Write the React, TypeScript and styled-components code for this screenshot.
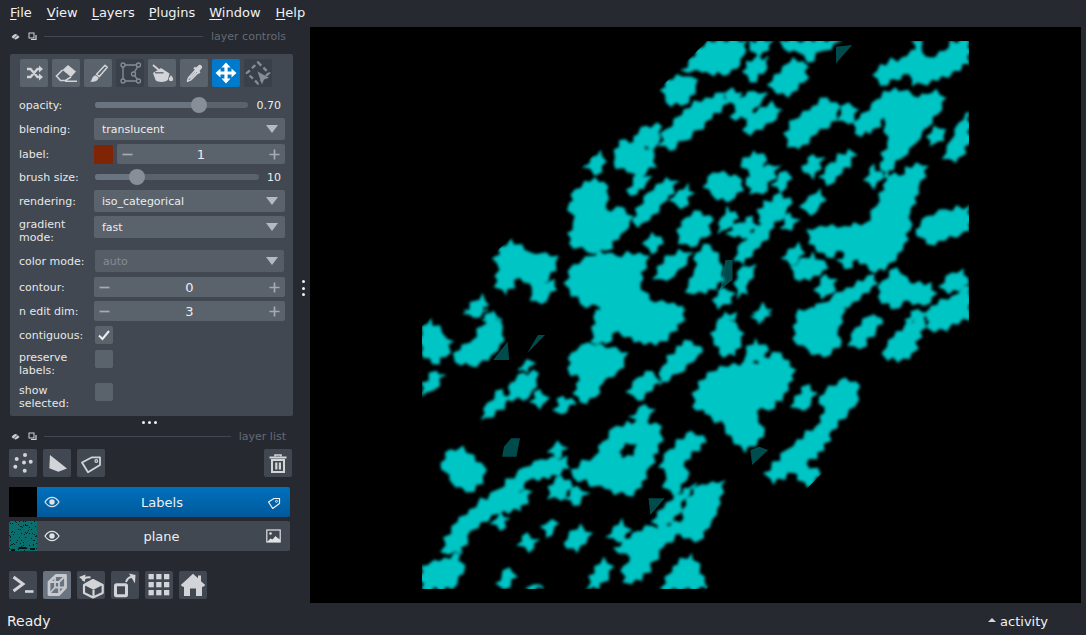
import React from "react";
import styled, { createGlobalStyle } from "styled-components";

const Global = createGlobalStyle`
  html, body { margin: 0; height: 100%; overflow: hidden; background: #262930; }
  #root { height: 100%; }
  * { box-sizing: border-box; }
`;

const Page = styled.div`
  width: 100%; height: 100vh; display: flex; flex-direction: column;
  background: #262930; color: #f0f1f2;
  font-family: "DejaVu Sans", "Liberation Sans", sans-serif;
`;
const MenuBar = styled.nav`
  height: 27px; flex: none; display: flex; align-items: center; gap: 14px; padding: 0 0 3px 10px; font-size: 13px;
`;
const MenuItem = styled.span`
  &:first-child { margin-right: 1px; }
  &:nth-child(5) { margin-right: 1px; }
  u { text-decoration: underline; text-underline-offset: 2px; }
`;
const Main = styled.div`flex: 1; display: flex; min-height: 0;`;
const Sidebar = styled.aside`width: 298px; flex: none; display: flex; flex-direction: column;`;
const Splitter = styled.div`
  width: 12px; flex: none; display: flex; flex-direction: column; align-items: center; justify-content: center; gap: 3.5px; padding-right: 2px;
  transform: translateY(-27px);
`;
const Dot = styled.i`width: 3px; height: 3px; border-radius: 50%; background: #f0f1f2; display: block;`;
const DockHeader = styled.div<{ $h: number; $mb: number }>`
  height: ${p => p.$h}px; margin-bottom: ${p => p.$mb}px; flex: none;
  display: flex; align-items: center; padding: 0 12px 0 11px; gap: 8px;
`;
const DockLine = styled.div`flex: 1; height: 1px; background: #414851; margin: 0 0 0 -1px;`;
const DockTitle = styled.span`font-size: 11px; color: #646b75;`;
const Panel = styled.section`
  margin-left: 10px; width: 283px; height: 362px; flex: none; background: #414851; border-radius: 2px; padding-top: 5px;
`;
const Toolbar = styled.div`display: flex; gap: 4px; padding-left: 10px;`;
const Btn = styled.div<{ $v?: "panel" | "dim" | "on" | "list" | "active" }>`
  width: 28px; height: 28px; flex: none; border-radius: 2px; display: flex; align-items: center; justify-content: center;
  color: ${p => (p.$v === "dim" ? "#868c94" : p.$v === "on" ? "#ffffff" : p.$v === "active" ? "#c6c9cd" : "#d2d4d7")};
  background: ${p => ({ panel: "#5a626c", dim: "#3a4049", on: "#007acc", list: "#414851", active: "#6a7380" }[p.$v || "list"])};
  svg { display: block; }
`;
const Row = styled.div<{ $h: number; $top: number }>`
  height: ${p => p.$h}px; margin-top: ${p => p.$top}px; display: flex; align-items: center; padding: 0 8px 0 9px;
`;
const Label = styled.div<{ $two?: number }>`
  width: 75px; flex: none; font-size: 11px; line-height: 13px; color: #e6e7e9;
  ${p => (p.$two !== undefined ? `align-self: flex-start; margin-top: ${p.$two}px;` : "")}
`;
const Combo = styled.div<{ $off?: boolean }>`
  flex: 1; height: 100%; border-radius: 2px; background: #5a626c; display: flex; align-items: center; justify-content: space-between;
  padding: 0 ${p => (p.$off ? 6 : 7)}px 0 8px; font-size: 11px; color: ${p => (p.$off ? "#868c94" : "#eceded")};
  ${p => (p.$off ? "margin: 0 1px; background: #565d67;" : "")}
`;
const Arrow = styled.i`
  width: 0; height: 0; border-left: 6.5px solid transparent; border-right: 6.5px solid transparent; border-top: 8px solid #b6babf; display: block;
`;
const SliderWrap = styled.div`flex: 1; display: flex; align-items: center; margin-left: 1px; margin-right: 4px;`;
const Track = styled.div`flex: 1; height: 6px; border-radius: 3px; background: #5a626c; position: relative;`;
const Fill = styled.div`height: 100%; border-radius: 3px; background: #6a7380;`;
const Knob = styled.div`position: absolute; top: -5px; width: 16px; height: 16px; margin-left: -8px; border-radius: 50%; background: #868e98;`;
const SliderValue = styled.div<{ $w: number }>`width: ${p => p.$w}px; flex: none; text-align: right; font-size: 11px; color: #eceded;`;
const Swatch = styled.div`width: 19px; height: 19px; background: #7f2506; border-radius: 1px; flex: none; margin-right: 4px;`;
const Spin = styled.div`
  flex: 1; height: 100%; background: #5a626c; border-radius: 2px; display: flex; align-items: center; justify-content: space-between;
  padding: 0 5px; font-size: 13px; color: #eceded;
`;
const Check = styled.div`width: 18px; height: 18px; margin-left: 1px; border-radius: 2px; background: #5a626c; display: flex; align-items: center; justify-content: center;`;
const HHandle = styled.div`height: 12px; flex: none; display: flex; align-items: center; justify-content: center; gap: 3px;`;
const ListTools = styled.div`display: flex; gap: 6px; padding: 0 6px 0 9px;`;
const Spacer = styled.div`flex: 1;`;
const LayerList = styled.div`margin: 10px 8px 0 9px; display: flex; flex-direction: column; gap: 4px;`;
const Layer = styled.div`height: 30px; display: flex;`;
const Thumb = styled.div`width: 28px; height: 100%; flex: none; background: #000;`;
const LayerBody = styled.div<{ $sel?: boolean }>`
  flex: 1; display: flex; align-items: center; padding: 0 9px 0 7px; border-radius: 0 2px 2px 0; font-size: 13px;
  background: ${p => (p.$sel ? "linear-gradient(#0071bd, #00599b)" : "#414851")};
  color: #eef0f1;
`;
const LayerName = styled.span`flex: 1; text-align: center; padding-right: 3px;`;
const BottomTools = styled.div`display: flex; gap: 6px; padding-left: 9px; margin-top: 20px;`;
const Canvas = styled.main`flex: 1; margin-right: 5px; background: #000; min-width: 0;`;
const CanvasSvg = styled.svg`display: block; width: 100%; height: 100%;`;
const StatusBar = styled.footer`height: 32px; flex: none; display: flex; align-items: center; justify-content: space-between; padding: 4px 38px 0 7px;`;
const StatusText = styled.span`font-size: 14px;`;
const Activity = styled.span`font-size: 13px; display: flex; align-items: center; gap: 4px;`;
const ActivityArrow = styled.i`width: 0; height: 0; border-left: 4px solid transparent; border-right: 4px solid transparent; border-bottom: 4px solid #d2d4d7; display: block; margin-top: -2px;`;

const Ic = ({ s = 28, w, h, children }: { s?: number; w?: number; h?: number; children: React.ReactNode }) => (
  <svg width={w || s} height={h || s} viewBox={`0 0 ${w || s} ${h || s}`} fill="none" stroke="none">{children}</svg>
);

const Shuffle = () => (
  <Ic>
    <path d="M7 10h3.500l7 8H20M7 18h3.500l7-8H20" stroke="currentColor" strokeWidth="2.400" />
    <path d="M19 6.500l4 3.500-4 3.500zM19 14.500l4 3.500-4 3.500z" fill="currentColor" />
  </Ic>
);
const Eraser = () => (
  <Ic>
    <path d="M16 6l8 6.500-5 5.500-8.500-7z" fill="currentColor" />
    <path d="M10.500 11L4.500 17l4 4.500h5l5.500-3.500M13 22.200h12" stroke="currentColor" strokeWidth="1.600" />
  </Ic>
);
const Brush = () => (
  <Ic>
    <path d="M21 6.200l2.300 2-8 9.400-2.700-2.300z" stroke="currentColor" strokeWidth="1.500" strokeLinejoin="round" />
    <path d="M11.700 16.200l3 2.500c-.4 2.500-3.500 4.500-8.700 4 1.600-1 1.500-2 2.400-4 .7-1.300 2-2.200 3.300-2.500z" fill="currentColor" />
  </Ic>
);
const PolygonIc = () => (
  <Ic>
    <path d="M7 6h15.500L17.500 15l5 7H7z" stroke="currentColor" strokeWidth="1.400" />
    {[[7, 6], [22.500, 6], [17.500, 15], [22.500, 22], [7, 22]].map(([x, y]) => (
      <circle key={x + "," + y} cx={x} cy={y} r="2" fill="#3a4049" stroke="currentColor" strokeWidth="1.300" />
    ))}
  </Ic>
);
const Bucket = () => (
  <Ic>
    <path d="M5 14l8-5 8.500 5.500-1.500 6c-1 2.800-10 3.600-12.500.5z" fill="currentColor" />
    <path d="M5 6l10.500 9" stroke="currentColor" strokeWidth="1.800" />
    <path d="M7 13.800h8.500" stroke="#5a626c" strokeWidth="1.300" />
    <path d="M23 16c1 1.700 2.200 2.800 2.200 4.100a2.200 2.200 0 0 1-4.400 0c0-1.300 1.200-2.400 2.200-4.100z" fill="currentColor" />
  </Ic>
);
const Picker = () => (
  <Ic>
    <path d="M16 8.500l3-2.500c1.500-.8 3.800 1.300 3 3l-2.500 3 1 1.300-1.600 1.600-5.600-5.600 1.600-1.600z" fill="currentColor" />
    <path d="M15.500 11l2.600 2.600-7.300 7.300-3.300 1.300 1-3.500z" fill="none" stroke="currentColor" strokeWidth="1.500" strokeLinejoin="round" />
    <path d="M15.500 12.500l1.300 1.300-5.800 5.800-2 .4.600-1.800z" fill="currentColor" />
  </Ic>
);
const MoveIc = () => (
  <Ic>
    <path d="M14 7v14M7 14h14" stroke="currentColor" strokeWidth="3.200" />
    <path d="M14 3.500l4.600 5H9.400zM14 24.500l-4.600-5h9.200zM3.500 14l5-4.600v9.200zM24.500 14l-5 4.600V9.400z" fill="currentColor" />
  </Ic>
);
const SelectIc = () => (
  <Ic>
    <path d="M14 3.500L25 14 14 24.500 3 14z" stroke="currentColor" strokeWidth="2.400" strokeDasharray="4.500 3" />
    <path d="M13.500 12.500l11.500 6.300-5 1.700-2 5z" fill="currentColor" />
  </Ic>
);
const PointsIc = () => (
  <Ic>
    {[[16, 6], [21.700, 12.700], [7.700, 10], [6.300, 17.700], [15.700, 21.700], [15, 13.500]].map(([x, y]) => (
      <circle key={x} cx={x} cy={y} r="2" fill="currentColor" />
    ))}
  </Ic>
);
const ShapesIc = () => (
  <Ic><path d="M7 6l17 13.500-8.700 3.300-9-3.500z" fill="currentColor" /></Ic>
);
const TagIc = () => (
  <Ic>
    <path d="M5 13.500L15 8.300h8V16l-12 7.300z" stroke="currentColor" strokeWidth="1.800" strokeLinejoin="round" />
    <circle cx="19.300" cy="12" r="1.300" stroke="currentColor" strokeWidth="1.200" />
  </Ic>
);
const TrashIc = () => (
  <Ic>
    <path d="M5.500 8.500h17" stroke="currentColor" strokeWidth="2" />
    <path d="M11 7.500V6h6v1.500" stroke="currentColor" strokeWidth="1.600" />
    <path d="M8 11h12v12H8z" stroke="currentColor" strokeWidth="2" />
    <path d="M11.200 13.500h2.200v7h-2.200zM14.800 13.500H17v7h-2.200z" fill="currentColor" />
  </Ic>
);
const Eye = () => (
  <Ic w={16} h={12}>
    <path d="M1 6c2-3.200 4.400-4.700 7-4.700S13 2.800 15 6c-2 3.200-4.400 4.700-7 4.700S3 9.200 1 6z" stroke="#dfe2e6" strokeWidth="1.300" />
    <circle cx="8" cy="6" r="2.700" fill="#dfe2e6" />
  </Ic>
);
const SmallTag = () => (
  <Ic w={14} h={14}>
    <path d="M1.500 7L7 3.500h5.500V8.500l-6.800 5z" stroke="#eef0f1" strokeWidth="1.200" strokeLinejoin="round" />
    <circle cx="9.500" cy="6.300" r="1" stroke="#eef0f1" strokeWidth=".9" />
  </Ic>
);
const ImageIc = () => (
  <Ic w={15} h={14}>
    <rect x=".8" y="1" width="13.400" height="12" stroke="#dfe2e6" strokeWidth="1.200" />
    <circle cx="4.500" cy="4.500" r="1.300" fill="#dfe2e6" />
    <path d="M1 13l3.500-3.500 2 1 3-3.500 1.500 1.500 3 2v2.500z" fill="#dfe2e6" />
  </Ic>
);
const ConsoleIc = () => (
  <Ic>
    <path d="M4.500 6l9.500 7-9.500 7" stroke="currentColor" strokeWidth="3" />
    <path d="M16 20.500h8.500" stroke="currentColor" strokeWidth="2.600" />
  </Ic>
);
const NdIc = () => (
  <Ic>
    <path d="M6 11L13 4.500h9.500v12L16 23.500H6z" stroke="currentColor" strokeWidth="2.800" strokeLinejoin="round" />
    <path d="M6 11h10v12.500M16 11l6.500-6.500M12 4.500V16.500H22.500M12 16.500L6 23" stroke="currentColor" strokeWidth="1.800" />
  </Ic>
);
const RollIc = () => (
  <Ic>
    <path d="M16 9l9.700 5v8L16 26.500 7 22v-8z" stroke="currentColor" strokeWidth="2.200" strokeLinejoin="round" />
    <path d="M16 9l9.700 5-9.200 4.800L7 14z" fill="currentColor" />
    <path d="M16.500 18.800v7.700" stroke="currentColor" strokeWidth="2.200" />
    <path d="M6 10c.6-2.800 3.500-4.500 7.500-3.500" stroke="currentColor" strokeWidth="2" />
    <path d="M2 6l6.500-2.500L8 11z" fill="currentColor" />
  </Ic>
);
const TransposeIc = () => (
  <Ic>
    <rect x="4.500" y="13.800" width="11" height="11" rx="1" stroke="currentColor" strokeWidth="3" />
    <path d="M15 11c1-3 3-5 6-5" stroke="currentColor" strokeWidth="2" />
    <path d="M18 2.500l6.500 1.500-.5 8.500z" fill="currentColor" />
  </Ic>
);
const GridIc = () => (
  <Ic>
    {[3, 11, 19].flatMap(y => [3.500, 11.200, 19].map(x => (
      <rect key={x + "-" + y} x={x} y={y} width="5.300" height="5.300" fill="currentColor" />
    )))}
  </Ic>
);
const HomeIc = () => (
  <Ic>
    <path d="M14 2.800l5 4.500V4.500h3v5.700l4.200 3.800-1.700 1.800H23V25h-6v-7.500h-6V25H5V15.800H3.500L1.800 14z" fill="currentColor" />
  </Ic>
);
const Ghost = () => (
  <Ic w={9} h={9}>
    <path d="M.5 5c1.500-2 3-3 4-3s2.500 1 4 3c-1.500 1.500-3 2.500-4 2.500S2 6.500.5 5z" fill="#c9ccd0" />
    <path d="M2 7.500l5-5" stroke="#262930" strokeWidth=".8" />
  </Ic>
);
const Float = () => (
  <Ic w={9} h={9}>
    <rect x="1" y="1" width="5" height="5" stroke="#d2d4d7" strokeWidth="1" />
    <path d="M3 7.500h5V3" stroke="#d2d4d7" strokeWidth="1.200" />
  </Ic>
);
const MinusSign = () => (
  <Ic w={11} h={11}><path d="M.5 5.500h10" stroke="#a6abb1" strokeWidth="1.700" /></Ic>
);
const PlusSign = () => (
  <Ic w={11} h={11}><path d="M.5 5.500h10M5.500.5v10" stroke="#a6abb1" strokeWidth="1.700" /></Ic>
);

const TOP = `805,33 915,33 905,75 885,115 850,135 790,125 735,120
925,33 985,33 975,60 950,80 925,60
1010,33 1175,33 1130,60 1085,95 1060,65 1020,55
915,95 975,80 960,130 925,155 905,125
1045,85 1085,110 1075,155 1030,200 1000,190 975,165
720,135 775,150 770,190 730,225 690,215 675,180
850,190 860,220 815,265 740,330 700,360 670,345 690,300 740,240 800,205
875,175 900,190 885,225 860,215 855,190
935,185 970,190 950,225 910,265 870,260 895,205
985,215 1010,240 985,275 925,315 905,300 925,255
1380,33 1405,33 1405,70 1430,85 1470,65 1485,33 1537,33 1537,100 1450,150 1380,165 1370,130 1290,165 1270,135 1290,105 1350,85 1390,60
1330,175 1380,200 1420,195 1445,180 1470,205 1450,250 1420,290 1385,340 1345,385 1310,420 1300,440 1340,440 1390,400 1420,410 1400,450 1395,490 1370,550 1370,600 1350,660 1300,720 1260,720 1225,680 1180,660 1140,680 1090,640 1085,600 1120,590 1190,590 1250,580 1280,530 1310,450 1290,400 1310,340 1300,260 1260,310 1220,310 1215,280 1280,210
1140,205 1175,230 1165,270 1110,310 1060,355 1030,350 1020,310 1050,270 1100,230
1200,220 1225,240 1200,280 1170,270 1180,230
1530,250 1537,250 1537,340 1500,395 1465,385 1490,330 1510,280
1440,290 1470,300 1465,330 1430,345 1420,320
635,290 675,290 665,340 650,360 600,340 600,320
575,330 625,345 655,375 660,410 610,435 580,425 545,400 545,360
505,365 520,395 490,435 460,410
615,430 645,440 625,475 590,495 580,480
490,445 525,470 520,540 570,535 595,560 575,600 520,660 470,665 420,640 415,610 430,580 420,520 435,480
690,445 720,455 690,510 640,570 610,590 595,570 640,490
750,465 765,490 730,535 700,510
850,425 900,450 905,480 860,515 820,495 795,470 820,430
935,365 970,390 955,420 925,435 900,410 905,385
975,405 1005,410 960,490 925,490 915,445 945,415
1025,425 1040,445 1010,485 985,465
1100,375 1130,385 1100,445 1070,410
1200,360 1220,375 1180,430 1140,465 1120,440 1150,400
1010,490 1040,520 1010,570 985,590 950,575 945,540
1120,480 1135,510 1095,555 1065,530 1090,500
1270,405 1295,445 1270,475 1245,450
1035,550 1060,570 1040,600 1010,595
785,545 820,570 800,620 760,650 725,640 720,600 745,565
860,530 890,565 860,595 835,610 845,565
930,560 945,590 905,625 880,620 860,610 895,580
975,570 990,590 950,650 905,700 880,690 900,640 940,590
650,610 680,640 650,670 625,640
725,660 760,670 735,710 690,750 655,745 665,710
810,645 835,670 850,750 800,790 745,785 770,720 775,670
615,670 640,680 615,760 640,810 710,820 735,830 740,870 495,870 505,830 450,820 405,760 430,705 480,680 500,660 550,680
255,630 310,670 385,680 380,720 340,760 375,750 380,780 340,820 310,810 315,770 280,740 240,790 210,770 225,720 205,685
175,795 190,825 150,860 125,850
205,845 230,870 175,870
905,710 940,705 920,750 915,790 890,800 880,760
850,775 880,790 870,820 835,835 820,810
1060,640 1075,670 1040,705 1015,685
1100,670 1140,715 1090,750 1050,745 1040,710
1210,665 1225,685 1190,715 1170,690
1135,735 1165,750 1150,790 1125,805 1105,780
1270,735 1280,760 1200,830 1130,870 1060,870 1130,820 1195,775
1335,715 1370,760 1430,760 1445,790 1410,825 1370,810 1320,835 1285,800 1295,755
1520,720 1535,760 1480,790 1455,770 1490,730
1537,770 1537,870 1420,870 1430,830 1490,800
1395,840 1420,850 1400,870 1360,870
1470,540 1537,530 1537,600 1470,630 1420,640 1390,600 1420,560
855,850 885,850 880,870 835,870
960,820 985,840 960,870 935,850
1270,855 1295,870 1250,870`;

const BOT = `125,0 190,0 150,20
195,10 230,50 235,90 190,150 140,165 100,155 95,130 150,90 175,50
6,50 30,30 60,70 90,95 70,140 35,160 6,130
45,185 70,195 35,240 6,255 6,220
290,190 330,190 325,230 290,270 245,265 255,220
230,240 250,265 205,320 175,325 190,280
335,240 360,265 335,295 310,275
400,260 435,280 395,310 375,300
300,150 320,160 300,185 275,180
470,100 580,130 570,170 510,220 490,260 450,275 430,250 450,210 415,175 425,130
495,0 740,0 720,60 660,105 600,95 555,60 520,100 480,95
760,95 790,125 720,190 670,225 680,170 720,110
650,185 670,215 610,270 580,245 610,205
630,285 655,300 620,340 590,320
855,10 905,70 880,135 840,130 815,70
940,90 975,120 950,155 910,150 915,110
960,0 980,15 950,40 930,20
1060,0 1190,0 1170,50 1175,110 1130,140 1090,120 1045,85
1260,20 1295,40 1230,115 1200,105 1220,55
1410,10 1415,50 1370,145 1310,150 1295,130 1335,65
1425,0 1537,0 1537,25 1440,65 1420,50
1010,130 1050,180 1030,240 975,300 955,290 945,320 960,380 910,425 880,400 855,345 800,310 765,290 780,215 840,170 930,160
1090,225 1110,250 1075,300 1040,290 1050,260
1190,205 1230,230 1215,290 1150,360 1130,420 1080,460 1120,495 1085,530 1040,485 990,520 965,490 1030,420 1110,350 1135,310 1120,260
410,440 415,475 360,505 300,510 270,545 310,545 280,600 220,610 140,660 115,730 60,725 90,650 140,600 220,540 290,475 340,450
395,500 425,530 395,570 360,565 360,530
440,530 470,550 430,585 405,565
385,395 410,415 380,445 360,425
120,410 185,480 175,520 130,545 85,510 60,460 85,420
225,610 250,625 225,660 200,640
110,735 120,790 90,835 6,835 6,770 70,745
300,670 330,690 305,725 275,705
370,630 385,640 355,680 340,650
450,645 480,670 440,725 405,700 420,665
565,630 590,660 555,695 525,680
250,775 270,800 235,835 215,820
515,745 540,770 500,835 470,835 490,770
850,515 840,580 810,650 770,695 730,670 680,710 620,810 570,815 570,770 590,740 545,715 610,665 650,650 730,640 745,565 790,525
775,520 740,565 725,610 670,655 650,635 690,580
760,735 795,800 805,835 675,835 710,770
760,365 800,395 740,450 745,510 710,555 680,530 690,490 670,470 700,420
345,835 320,825 300,835`;

const RING = "630,335 675,350 680,390 640,470 620,530 580,555 520,535 430,500 425,480 490,440 515,395 550,350";
const HOLE = "575,395 610,400 600,440 565,450 555,425";

const DIM: [number, string][] = [
  [30, "1165,50 1210,45 1165,100"],
  [30, "855,690 875,690 875,750 840,780"],
  [310, "245,95 250,150 205,150"],
  [310, "350,75 330,75 300,130"],
  [310, "255,385 280,385 270,440 230,440 235,410"],
  [310, "950,410 975,420 930,465 925,420"],
  [310, "640,565 685,565 645,615"],
  [310, "1035,590 1020,605 1000,625"],
];

const toCanvas = (str: string, yBase: number) =>
  str.trim().split(/\s+/).map(pair => {
    const [x, y] = pair.split(",").map(Number);
    return [420 + x / 2.8 - 310, yBase + y / 3 - 27];
  });

let seed = 7;
const rnd = () => { seed = (seed * 9301 + 49297) % 233280; return seed / 233280; };

const jagged = (pts: number[][]) => {
  const out: string[] = [];
  pts.forEach((p, i) => {
    const q = pts[(i + 1) % pts.length];
    out.push(`${p[0].toFixed(1)},${p[1].toFixed(1)}`);
    const dx = q[0] - p[0], dy = q[1] - p[1], len = Math.hypot(dx, dy);
    if (len > 9) {
      const n = Math.max(1, Math.floor(len / 7));
      for (let k = 1; k <= n; k++) {
        const t = (k + (rnd() - 0.5) * 0.5) / (n + 1), a = (k % 2 ? 1 : -1) * (1 + rnd() * 2.400);
        out.push(`${(p[0] + dx * t - (dy / len) * a).toFixed(1)},${(p[1] + dy * t + (dx / len) * a).toFixed(1)}`);
      }
    }
  });
  return "M" + out.join("L") + "Z";
};

const blobs = [
  ...TOP.split("\n").map(l => jagged(toCanvas(l, 30))),
  ...BOT.split("\n").map(l => jagged(toCanvas(l, 310))),
  jagged(toCanvas(RING, 310)) + jagged(toCanvas(HOLE, 310)),
];
const dims = DIM.map(([b, s]) => "M" + toCanvas(s, b).map(p => p.join(",")).join("L") + "Z");

const Blobs = () => (
  <CanvasSvg viewBox="0 0 771 576" preserveAspectRatio="none">
    <defs>
      <filter id="soft" x="-5%" y="-5%" width="110%" height="110%">
        <feGaussianBlur stdDeviation="1.800" />
      </filter>
      <clipPath id="square">
        <polygon points="397,14 659,14 659,299 397,562 112,562 112,299" />
      </clipPath>
    </defs>
    <g clipPath="url(#square)">
      {dims.map((d, i) => <path key={i} d={d} fill="#004c4c" />)}
      <g filter="url(#soft)">
        {blobs.map((d, i) => <path key={i} d={d} fill="#00c5c5" stroke="#00c5c5" strokeWidth="1.600" strokeLinejoin="miter" fillRule="evenodd" />)}
      </g>
    </g>
  </CanvasSvg>
);

const speck = Array.from({ length: 70 }, (_, i) => {
  const x = (i * 37 + (i * i) % 11) % 28;
  const y = (i * 13 + (i * i * 3) % 17) % 30;
  return [x, y];
});
const PlaneThumb = () => (
  <svg width="28" height="30" viewBox="0 0 28 30" style={{ display: "block" }}>
    <rect width="28" height="30" fill="#0a6e6c" />
    {speck.map(([x, y], i) => <rect key={i} x={x} y={y} width="1" height="1" fill="#03201f" />)}
    <path d="M10 26h7l1.500 2H9zM2 28h4v2H2zM21 27h5v2h-5z" fill="#021414" />
  </svg>
);

const Slider = ({ pct, value, w }: { pct: number; value: string; w: number }) => (
  <SliderWrap>
    <Track>
      <Fill style={{ width: `${pct}%` }} />
      <Knob style={{ left: `${pct}%` }} />
    </Track>
    <SliderValue $w={w}>{value}</SliderValue>
  </SliderWrap>
);
const SpinBox = ({ v }: { v: string }) => (
  <Spin><MinusSign /><span>{v}</span><PlusSign /></Spin>
);
const Select = ({ v, off }: { v: string; off?: boolean }) => (
  <Combo $off={off}>{v}<Arrow /></Combo>
);
const DockHead = ({ title, h, mb }: { title: string; h: number; mb: number }) => (
  <DockHeader $h={h} $mb={mb}><Ghost /><Float /><DockLine /><DockTitle>{title}</DockTitle></DockHeader>
);

export default function App() {
  return (
    <Page>
      <Global />
      <MenuBar>
        {["File", "View", "Layers", "Plugins", "Window", "Help"].map(m => (
          <MenuItem key={m}><u>{m[0]}</u>{m.slice(1)}</MenuItem>
        ))}
      </MenuBar>
      <Main>
        <Sidebar>
          <DockHead title="layer controls" h={18} mb={9} />
          <Panel>
            <Toolbar>
              <Btn $v="panel"><Shuffle /></Btn>
              <Btn $v="panel"><Eraser /></Btn>
              <Btn $v="panel"><Brush /></Btn>
              <Btn $v="dim"><PolygonIc /></Btn>
              <Btn $v="panel"><Bucket /></Btn>
              <Btn $v="panel"><Picker /></Btn>
              <Btn $v="on"><MoveIc /></Btn>
              <Btn $v="dim"><SelectIc /></Btn>
            </Toolbar>
            <Row $h={22} $top={7}><Label>opacity:</Label><Slider pct={68} value="0.70" w={33} /></Row>
            <Row $h={22} $top={2}><Label>blending:</Label><Select v="translucent" /></Row>
            <Row $h={20} $top={4}><Label>label:</Label><Swatch /><SpinBox v="1" /></Row>
            <Row $h={22} $top={2}><Label>brush size:</Label><Slider pct={25.600} value="10" w={22} /></Row>
            <Row $h={22} $top={2}><Label>rendering:</Label><Select v="iso_categorical" /></Row>
            <Row $h={22} $top={4}><Label $two={2}>gradient<br />mode:</Label><Select v="fast" /></Row>
            <Row $h={22} $top={12}><Label>color mode:</Label><Select v="auto" off /></Row>
            <Row $h={20} $top={5}><Label>contour:</Label><SpinBox v="0" /></Row>
            <Row $h={20} $top={4}><Label>n edit dim:</Label><SpinBox v="3" /></Row>
            <Row $h={18} $top={5}>
              <Label>contiguous:</Label>
              <Check>
                <svg width="14" height="12" viewBox="0 0 14 12"><path d="M2 6.500l3.500 3.500L12 2" fill="none" stroke="#eceded" strokeWidth="2" /></svg>
              </Check>
            </Row>
            <Row $h={18} $top={6}><Label $two={1}>preserve<br />labels:</Label><Check /></Row>
            <Row $h={18} $top={15}><Label $two={1}>show<br />selected:</Label><Check /></Row>
          </Panel>
          <HHandle><Dot /><Dot /><Dot /></HHandle>
          <DockHead title="layer list" h={16} mb={5} />
          <ListTools>
            <Btn><PointsIc /></Btn>
            <Btn><ShapesIc /></Btn>
            <Btn><TagIc /></Btn>
            <Spacer />
            <Btn><TrashIc /></Btn>
          </ListTools>
          <LayerList>
            <Layer>
              <Thumb />
              <LayerBody $sel><Eye /><LayerName>Labels</LayerName><SmallTag /></LayerBody>
            </Layer>
            <Layer>
              <Thumb><PlaneThumb /></Thumb>
              <LayerBody><Eye /><LayerName>plane</LayerName><ImageIc /></LayerBody>
            </Layer>
          </LayerList>
          <BottomTools>
            <Btn><ConsoleIc /></Btn>
            <Btn $v="active"><NdIc /></Btn>
            <Btn><RollIc /></Btn>
            <Btn><TransposeIc /></Btn>
            <Btn><GridIc /></Btn>
            <Btn><HomeIc /></Btn>
          </BottomTools>
        </Sidebar>
        <Splitter><Dot /><Dot /><Dot /></Splitter>
        <Canvas><Blobs /></Canvas>
      </Main>
      <StatusBar>
        <StatusText>Ready</StatusText>
        <Activity><ActivityArrow />activity</Activity>
      </StatusBar>
    </Page>
  );
}
